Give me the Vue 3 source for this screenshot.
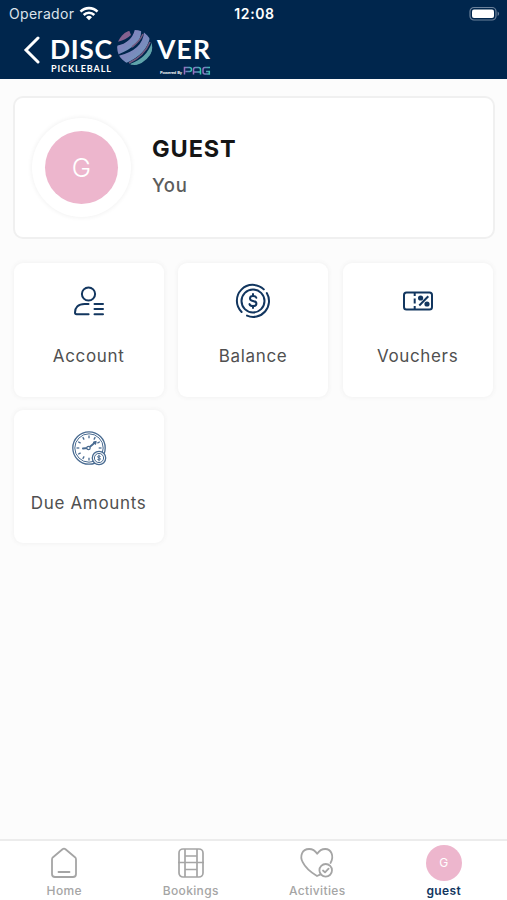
<template>
  <div class="screen">
    <header class="header">
      <div class="status-bar">
        <div class="carrier">
          <span>Operador</span>
          <svg class="wifi" viewBox="0 0 20 15" fill="none" stroke="#fff" stroke-width="2.6">
            <path d="M1.5 5.7a12 12 0 0 1 17 0" />
            <path d="M4.7 9a7.5 7.5 0 0 1 10.6 0" />
            <path d="M10 14.2 7 11.2a4.3 4.3 0 0 1 6 0z" fill="#fff" stroke="none" />
          </svg>
        </div>
        <span class="clock">12:08</span>
        <svg class="battery" viewBox="0 0 32 16">
          <rect x="1" y="1.5" width="26" height="12.5" rx="4" fill="none" stroke="#6b819b" stroke-width="1.2" />
          <rect x="3" y="3.5" width="22" height="8.5" rx="2" fill="#fff" />
          <path d="M28.6 5.5c2 .9 2 3.6 0 4.5z" fill="#6b819b" />
        </svg>
      </div>
      <div class="brand-bar">
        <button class="back" aria-label="Back">
          <svg viewBox="0 0 18 28" fill="none" stroke="#fff" stroke-width="3" stroke-linecap="round">
            <path d="M15 2 3 14l12 12" />
          </svg>
        </button>
        <svg class="logo" viewBox="0 0 164 50">
          <defs>
            <linearGradient id="ball" x1="0" y1="0" x2="1" y2="1">
              <stop offset="0" stop-color="#9b86bd" />
              <stop offset="0.5" stop-color="#7d86bd" />
              <stop offset="1" stop-color="#68a5bd" />
            </linearGradient>
            <linearGradient id="pag" x1="0" x2="1">
              <stop offset="0" stop-color="#9a70c0" />
              <stop offset="0.5" stop-color="#5e8fbd" />
              <stop offset="1" stop-color="#38c9ac" />
            </linearGradient>
            <clipPath id="ballClip"><circle cx="84.7" cy="18.5" r="17.5" /></clipPath>
          </defs>
          <g class="logo-text">
            <text x="0" y="29.5" font-size="26.5" textLength="62">DISC</text>
            <text x="107" y="29.5" font-size="26.5" textLength="53">VER</text>
            <text x="1" y="43" font-size="9" textLength="60">PICKLEBALL</text>
            <text x="110" y="45" font-size="4.2" textLength="22">Powered By</text>
          </g>
          <g clip-path="url(#ballClip)">
            <path d="M67 9Q73 4 79 1l2 5Q76 11 67 13z" fill="#86618f" />
            <path d="M66 17Q82 14 85 0l6 1Q93 16 67 26z" fill="url(#ball)" />
            <path d="M68 27Q93 21 94 3l6 5Q97 25 76 34z" fill="url(#ball)" />
            <path d="M80 35Q97 29 102 13l2 5Q98 35 82 37z" fill="#5fa3aa" />
            <path d="M82 18q8-6 11-13M79 34q15-7 21-21" fill="none" stroke="#73597f" stroke-width="1.6" />
          </g>
          <g fill="none" stroke="url(#pag)" stroke-width="1.5">
            <path d="M134.5 45.5v-7h5q2 0 2 2t-2 2h-4" />
            <path d="M143.5 45.5v-5q0-2 2-2h3q2 0 2 2v5m-7-2.6h7" />
            <path d="M160 38.5h-5q-2 0-2 2V43q0 2 2 2h4.3v-2.5H156" />
          </g>
        </svg>
      </div>
    </header>

    <main class="content">
      <section class="profile">
        <div class="avatar-ring">
          <div class="avatar">G</div>
        </div>
        <div class="profile-info">
          <h1>GUEST</h1>
          <p>You</p>
        </div>
      </section>

      <section class="tiles">
        <button v-for="tile in tiles" :key="tile.id" class="tile">
          <svg v-if="tile.id === 'account'" class="tile-icon" viewBox="0 0 36 36" fill="none" stroke="#12365f" stroke-width="2" stroke-linecap="round">
            <circle cx="17.5" cy="11" r="6.6" />
            <path d="M17.5 21h-4C7 21 4 25 4 29.5q0 1.7 1.6 1.7h12M23.5 21h8.5M23.5 26h8.5M23.5 31.2H32" />
          </svg>
          <svg v-else-if="tile.id === 'balance'" class="tile-icon" viewBox="0 0 36 36" fill="none" stroke="#12365f" stroke-width="2" stroke-linecap="round">
            <circle cx="18" cy="18" r="11.5" />
            <path d="M28.8 6.4A15.8 15.8 0 0 0 6.6 29M31.8 10A15.8 15.8 0 0 1 12 32.6" />
            <path d="M21.3 14.8q-.6-1.8-3.3-1.8-3 0-3 2.4 0 2 3 2.5 3.4.6 3.4 2.8 0 2.4-3.4 2.4-2.9 0-3.5-2M18 11v2m0 10v2" />
          </svg>
          <svg v-else-if="tile.id === 'vouchers'" class="tile-icon" viewBox="0 0 36 36" fill="none" stroke="#12365f" stroke-width="2">
            <rect x="4" y="9.5" width="28" height="17" rx="2.5" />
            <path d="M14.7 10v3m0 2.5v5m0 2.5v3" />
            <path d="m19.3 22.5 9-9.2" />
            <circle cx="20.6" cy="15" r="1.6" fill="#12365f" />
            <circle cx="27" cy="21" r="1.6" fill="#12365f" />
          </svg>
          <svg v-else class="tile-icon" viewBox="0 0 36 36" fill="none" stroke="#496b91">
            <circle cx="18" cy="18" r="16.2" stroke-width="1.3" />
            <circle cx="18" cy="18" r="14.2" stroke-width="1" />
            <path
              v-for="n in 12"
              :key="n"
              :transform="`rotate(${n * 30} 18 18)`"
              d="M18 5.5v2.8"
              stroke-width="1.3"
            />
            <path d="m12 18.5 5.5-.6 6.6-5.5" stroke-width="2" stroke-linecap="round" />
            <circle cx="17.5" cy="18" r="1.7" fill="#fff" stroke-width="1.2" />
            <path d="m22 12.3 3.2-1-.6 3.1z" fill="#496b91" />
            <circle cx="28" cy="28" r="6.7" fill="#fff" stroke-width="1.3" />
            <circle cx="28" cy="28" r="4.6" stroke-width="1" />
            <path d="M29.6 26.5q-3-1.5-3 .3c0 1.5 3 .8 3 2.4q-.7 1.4-3.2.2M28 24.7v6.6" stroke-width="1" />
          </svg>
          <span class="tile-label">{{ tile.label }}</span>
        </button>
      </section>
    </main>

    <nav class="tab-bar">
      <a v-for="tab in tabs" :key="tab.id" class="tab" :class="{ active: tab.id === activeTab }">
        <svg v-if="tab.id === 'home'" class="tab-icon" viewBox="0 0 36 36" fill="none" stroke="#a5a5a5" stroke-width="1.8" stroke-linejoin="round" stroke-linecap="round">
          <path d="M6 14.5q0-1.4 1-2.3l9.5-8q1.5-1.2 3 0l9.5 8q1 .9 1 2.3V29q0 3-3 3H9q-3 0-3-3z" />
          <path d="M12.5 27h11" />
        </svg>
        <svg v-else-if="tab.id === 'bookings'" class="tab-icon" viewBox="0 0 36 36" fill="none" stroke="#a5a5a5" stroke-width="1.7">
          <rect x="6" y="4" width="24" height="28" rx="4" />
          <path d="M12 4v28M24 4v28M5 17.5h26M12 11h12M12 24.5h12" />
        </svg>
        <svg v-else-if="tab.id === 'activities'" class="tab-icon" viewBox="0 0 36 36" fill="none" stroke="#a5a5a5" stroke-width="1.8" stroke-linejoin="round" stroke-linecap="round">
          <path d="M31.5 18c4-7 .7-14-5.3-14-3.4 0-6 1.7-8 4.8-2-3.1-4.8-4.8-8.1-4.8C3 4 .5 11 3.7 17.2 6.4 22.8 12 27.5 18 31l3-1.4" />
          <circle cx="26.7" cy="25.3" r="6.3" />
          <path d="m24 25.5 2 1.9 3.6-3.8" />
        </svg>
        <div v-else class="tab-avatar">G</div>
        <span class="tab-label">{{ tab.label }}</span>
      </a>
    </nav>
  </div>
</template>

<script setup>
import { ref } from "vue";

const tiles = [
  { id: "account", label: "Account" },
  { id: "balance", label: "Balance" },
  { id: "vouchers", label: "Vouchers" },
  { id: "due", label: "Due Amounts" },
];

const tabs = [
  { id: "home", label: "Home" },
  { id: "bookings", label: "Bookings" },
  { id: "activities", label: "Activities" },
  { id: "guest", label: "guest" },
];

const activeTab = ref("guest");
</script>

<style>
body {
  margin: 0;
}
</style>

<style scoped>
.screen {
  display: flex;
  flex-direction: column;
  height: 100vh;
  background: #fcfcfc;
  font-family: "Inter", "Liberation Sans", sans-serif;
}

.header {
  box-sizing: border-box;
  height: 79px;
  background: #00264d;
  color: #fff;
}

.status-bar {
  display: grid;
  grid-template-columns: 1fr auto 1fr;
  align-items: center;
  height: 27px;
  padding: 0 6px 0 9px;
}

.carrier {
  display: flex;
  align-items: center;
  gap: 5px;
  font-size: 14px;
  letter-spacing: 0.3px;
  color: #dce3eb;
}

.wifi {
  width: 20px;
  height: 15px;
}

.clock {
  margin-right: 1px;
  font-size: 14px;
  font-weight: 600;
  letter-spacing: 0.6px;
}

.battery {
  justify-self: end;
  width: 32px;
  height: 16px;
}

.brand-bar {
  display: flex;
  align-items: flex-start;
  padding-left: 23px;
}

.back {
  display: flex;
  margin: 9px 9px 0 0;
  padding: 0;
  border: none;
  background: none;
}

.back svg {
  width: 18px;
  height: 28px;
}

.logo {
  width: 164px;
  height: 50px;
  margin-top: 2px;
}

.logo-text {
  fill: #fff;
  font-family: "Lato", sans-serif;
  font-weight: 700;
}

.content {
  flex: 1;
  padding: 17px 12px 0 13px;
}

.profile {
  display: flex;
  align-items: center;
  gap: 21px;
  box-sizing: border-box;
  height: 143px;
  padding-left: 17px;
  border: 2px solid #f0f0f0;
  border-radius: 10px;
  background: #fff;
}

.avatar-ring {
  display: flex;
  align-items: center;
  justify-content: center;
  box-sizing: border-box;
  width: 99px;
  height: 99px;
  border-radius: 50%;
  background: #fff;
  box-shadow: 0 0 4px 1px #f3f3f3;
}

.avatar {
  width: 73px;
  height: 73px;
  border-radius: 50%;
  background: #edb6cd;
  color: #fff;
  font-size: 26px;
  font-weight: 300;
  line-height: 74px;
  text-align: center;
}

.profile-info h1 {
  margin: -3px 0 0;
  color: #151515;
  font-size: 23.5px;
  font-weight: 700;
  line-height: 30px;
  letter-spacing: 0.9px;
}

.profile-info p {
  margin: 8px 0 0;
  color: #5c5c5c;
  font-size: 18.5px;
  font-weight: 500;
  line-height: 26px;
  letter-spacing: 0.6px;
}

.tiles {
  display: grid;
  grid-template-columns: repeat(3, 150px);
  gap: 13px 14.5px;
  padding: 24px 0 0 0.6px;
}

.tile {
  display: flex;
  flex-direction: column;
  align-items: center;
  height: 133.5px;
  padding: 20px 0 0;
  border: none;
  border-radius: 9px;
  background: #fff;
  box-shadow: 0 0 4px 1px #f2f2f2;
  font-family: inherit;
}

.tile-icon {
  width: 36px;
  height: 36px;
}

.tile-label {
  margin-top: 25px;
  color: #505050;
  font-size: 17px;
  line-height: 24px;
  letter-spacing: 0.65px;
  white-space: nowrap;
}

.tab-bar {
  display: grid;
  grid-template-columns: repeat(4, 1fr);
  box-sizing: border-box;
  height: 61px;
  padding-left: 1px;
  border-top: 2px solid #ececec;
  background: #fff;
}

.tab {
  display: flex;
  flex-direction: column;
  align-items: center;
  padding-top: 4px;
  color: #a5a5a5;
}

.tab-icon,
.tab-avatar {
  width: 36px;
  height: 36px;
}

.tab-avatar {
  border-radius: 50%;
  background: #edb6cd;
  color: #fff;
  font-size: 12px;
  line-height: 36px;
  text-align: center;
}

.tab-label {
  margin-top: 2px;
  font-size: 12px;
  font-weight: 500;
  line-height: 16px;
  letter-spacing: 0.35px;
}

.tab.active .tab-label {
  color: #12365f;
  font-weight: 600;
}
</style>
